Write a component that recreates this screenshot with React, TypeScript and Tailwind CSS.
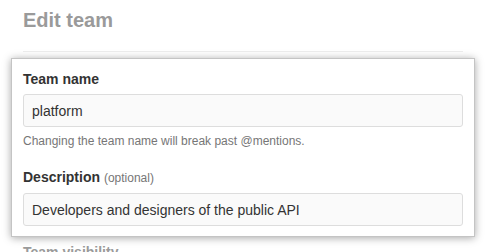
export default function App() {
  return (
    <div className="min-h-screen bg-white pl-[23px] pr-[24px] pt-[8px] font-['Liberation_Sans',Arial,sans-serif] overflow-hidden h-[252px]">
      <h1 className="text-[20px] leading-[25px] font-bold text-[#9a9a9a]">Edit team</h1>
      <div className="mt-[18px] h-px bg-[#eeeeee]" />

      {/* highlighted form card */}
      <div className="mt-[6px] -mx-[12px] border border-[#c4c4c4] bg-white px-[11px] pt-[10px] pb-[10px] shadow-[0_1px_8px_rgba(0,0,0,0.35)]">
        <label className="block text-[14px] leading-[20px] font-bold text-[#333]">Team name</label>
        <input
          readOnly
          value="platform"
          className="mt-[5px] block w-full h-[33px] rounded-[3px] border border-[#dddddd] bg-[#fafafa] px-[8px] text-[14px] text-[#333] outline-none"
        />
        <p className="mt-[5px] text-[12px] leading-[18px] text-[#767676]">
          Changing the team name will break past @mentions.
        </p>

        <label className="mt-[17px] block text-[14px] leading-[20px] font-bold text-[#333]">
          Description <span className="text-[12px] font-normal text-[#767676]">(optional)</span>
        </label>
        <input
          readOnly
          value="Developers and designers of the public API"
          className="mt-[5px] block w-full h-[33px] rounded-[3px] border border-[#dddddd] bg-[#fafafa] px-[8px] text-[14px] text-[#333] outline-none"
        />
      </div>

      <div className="mt-[5px] text-[14px] leading-[20px] font-bold text-[#9a9a9a]">Team visibility</div>
    </div>
  );
}
